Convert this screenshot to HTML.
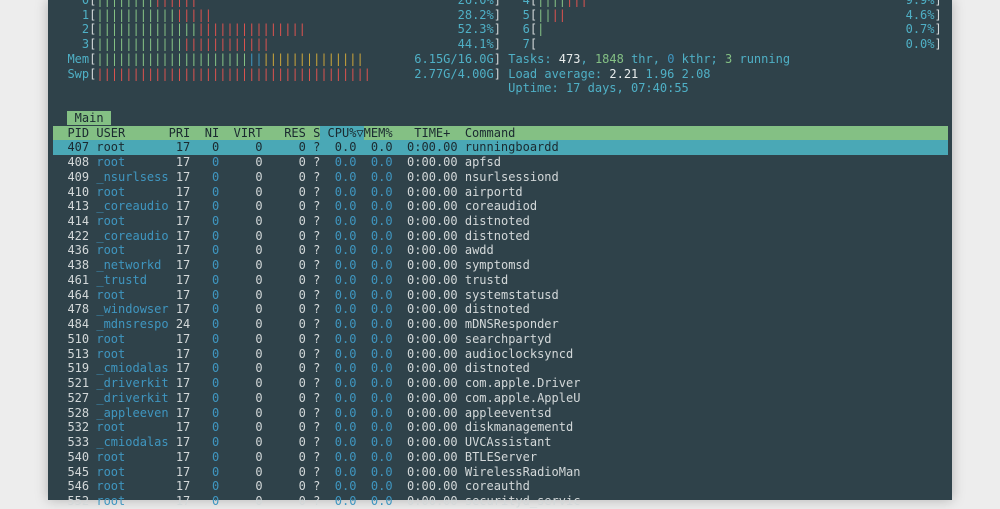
<!DOCTYPE html>
<html><head><meta charset="utf-8"><style>
html,body{margin:0;padding:0;width:1000px;height:500px;overflow:hidden;background:#ededed;}
#win{position:absolute;left:48px;top:0;width:904px;height:500px;background:#2f424a;box-shadow:0 0 12px rgba(0,0,0,.25);}
#t{position:absolute;left:53px;top:-7px;font-family:"DejaVu Sans Mono","Liberation Mono",monospace;font-size:12px;color:#d3d8d9;}
.l{height:14.74px;line-height:14.74px;white-space:pre;width:895px;}
.c{color:#4fb0c6}.b{color:#3f96c0}.g{color:#84c084}.r{color:#d9534f}.y{color:#c9a33a}.w{color:#e8ecec}
.hdr{background:#84c084;color:#1b2a30}
.sel{background:#4aa8b6;color:#1b2a30}
.cpu{background:#4aa8b6}
.tab{background:#84c084;color:#1b2a30}
</style></head><body>
<div id="win"></div>
<div id="t">
<div class="l">    <span class="c">0</span>[<span class="g">||||||||</span><span class="r">||||||</span>                                    <span class="c">26.0%</span>]   <span class="c">4</span>[<span class="g">||||</span><span class="r">|||</span>                                            <span class="c">9.9%</span>]</div>
<div class="l">    <span class="c">1</span>[<span class="g">|||||||||||</span><span class="r">|||||</span>                                  <span class="c">28.2%</span>]   <span class="c">5</span>[<span class="g">||</span><span class="r">||</span>                                               <span class="c">4.6%</span>]</div>
<div class="l">    <span class="c">2</span>[<span class="g">||||||||||||||</span><span class="r">|||||||||||||||</span>                     <span class="c">52.3%</span>]   <span class="c">6</span>[<span class="g">|</span>                                                  <span class="c">0.7%</span>]</div>
<div class="l">    <span class="c">3</span>[<span class="g">||||||||||||</span><span class="r">||||||||||||</span>                          <span class="c">44.1%</span>]   <span class="c">7</span>[                                                   <span class="c">0.0%</span>]</div>
<div class="l">  <span class="c">Mem</span>[<span class="g">|||||||||||||||||||||</span><span class="b">||</span><span class="y">||||||||||||||</span>       <span class="c">6.15G/16.0G</span>] <span class="c">Tasks: </span><span class="w">473</span><span class="c">, </span><span class="g">1848</span><span class="c"> thr, </span><span class="b">0</span><span class="c"> kthr; </span><span class="g">3</span><span class="c"> running</span></div>
<div class="l">  <span class="c">Swp</span>[<span class="r">||||||||||||||||||||||||||||||||||||||</span>      <span class="c">2.77G/4.00G</span>] <span class="c">Load average: </span><span class="w">2.21 </span><span class="c">1.96 2.08</span></div>
<div class="l">                                                               <span class="c">Uptime: 17 days, 07:40:55</span></div>
<div class="l"> </div>
<div class="l">  <span class="tab"> Main </span></div>
<div class="l hdr">  PID USER      PRI  NI  VIRT   RES S<span class="cpu"> CPU%▽</span>MEM%   TIME+  Command</div>
<div class="l sel">  407 root       17   0     0     0 ?  0.0  0.0  0:00.00 runningboardd</div>
<div class="l">  408 <span class="b">root      </span> 17   <span class="b">0</span>     0     0 ?  <span class="b">0.0  0.0</span>  0:00.00 apfsd</div>
<div class="l">  409 <span class="b">_nsurlsess</span> 17   <span class="b">0</span>     0     0 ?  <span class="b">0.0  0.0</span>  0:00.00 nsurlsessiond</div>
<div class="l">  410 <span class="b">root      </span> 17   <span class="b">0</span>     0     0 ?  <span class="b">0.0  0.0</span>  0:00.00 airportd</div>
<div class="l">  413 <span class="b">_coreaudio</span> 17   <span class="b">0</span>     0     0 ?  <span class="b">0.0  0.0</span>  0:00.00 coreaudiod</div>
<div class="l">  414 <span class="b">root      </span> 17   <span class="b">0</span>     0     0 ?  <span class="b">0.0  0.0</span>  0:00.00 distnoted</div>
<div class="l">  422 <span class="b">_coreaudio</span> 17   <span class="b">0</span>     0     0 ?  <span class="b">0.0  0.0</span>  0:00.00 distnoted</div>
<div class="l">  436 <span class="b">root      </span> 17   <span class="b">0</span>     0     0 ?  <span class="b">0.0  0.0</span>  0:00.00 awdd</div>
<div class="l">  438 <span class="b">_networkd </span> 17   <span class="b">0</span>     0     0 ?  <span class="b">0.0  0.0</span>  0:00.00 symptomsd</div>
<div class="l">  461 <span class="b">_trustd   </span> 17   <span class="b">0</span>     0     0 ?  <span class="b">0.0  0.0</span>  0:00.00 trustd</div>
<div class="l">  464 <span class="b">root      </span> 17   <span class="b">0</span>     0     0 ?  <span class="b">0.0  0.0</span>  0:00.00 systemstatusd</div>
<div class="l">  478 <span class="b">_windowser</span> 17   <span class="b">0</span>     0     0 ?  <span class="b">0.0  0.0</span>  0:00.00 distnoted</div>
<div class="l">  484 <span class="b">_mdnsrespo</span> 24   <span class="b">0</span>     0     0 ?  <span class="b">0.0  0.0</span>  0:00.00 mDNSResponder</div>
<div class="l">  510 <span class="b">root      </span> 17   <span class="b">0</span>     0     0 ?  <span class="b">0.0  0.0</span>  0:00.00 searchpartyd</div>
<div class="l">  513 <span class="b">root      </span> 17   <span class="b">0</span>     0     0 ?  <span class="b">0.0  0.0</span>  0:00.00 audioclocksyncd</div>
<div class="l">  519 <span class="b">_cmiodalas</span> 17   <span class="b">0</span>     0     0 ?  <span class="b">0.0  0.0</span>  0:00.00 distnoted</div>
<div class="l">  521 <span class="b">_driverkit</span> 17   <span class="b">0</span>     0     0 ?  <span class="b">0.0  0.0</span>  0:00.00 com.apple.Driver</div>
<div class="l">  527 <span class="b">_driverkit</span> 17   <span class="b">0</span>     0     0 ?  <span class="b">0.0  0.0</span>  0:00.00 com.apple.AppleU</div>
<div class="l">  528 <span class="b">_appleeven</span> 17   <span class="b">0</span>     0     0 ?  <span class="b">0.0  0.0</span>  0:00.00 appleeventsd</div>
<div class="l">  532 <span class="b">root      </span> 17   <span class="b">0</span>     0     0 ?  <span class="b">0.0  0.0</span>  0:00.00 diskmanagementd</div>
<div class="l">  533 <span class="b">_cmiodalas</span> 17   <span class="b">0</span>     0     0 ?  <span class="b">0.0  0.0</span>  0:00.00 UVCAssistant</div>
<div class="l">  540 <span class="b">root      </span> 17   <span class="b">0</span>     0     0 ?  <span class="b">0.0  0.0</span>  0:00.00 BTLEServer</div>
<div class="l">  545 <span class="b">root      </span> 17   <span class="b">0</span>     0     0 ?  <span class="b">0.0  0.0</span>  0:00.00 WirelessRadioMan</div>
<div class="l">  546 <span class="b">root      </span> 17   <span class="b">0</span>     0     0 ?  <span class="b">0.0  0.0</span>  0:00.00 coreauthd</div>
<div class="l">  552 <span class="b">root      </span> 17   <span class="b">0</span>     0     0 ?  <span class="b">0.0  0.0</span>  0:00.00 securityd_servic</div>
</div>
</body></html>
